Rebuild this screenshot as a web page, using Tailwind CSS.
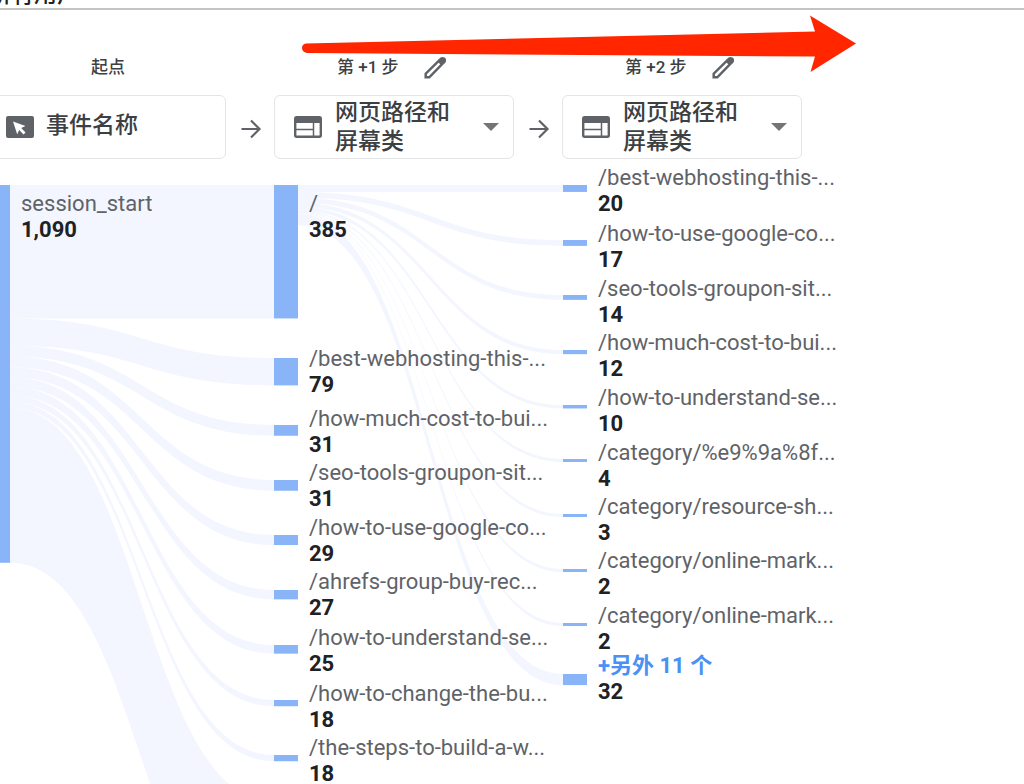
<!DOCTYPE html>
<html lang="zh-CN">
<head>
    <meta charset="UTF-8">
    <meta name="viewport" content="width=device-width, initial-scale=1.0">
    <title>路径探索</title>
    <script src="https://cdn.jsdelivr.net/npm/@tailwindcss/browser@4"></script>
</head>
<body class="bg-white font-[Roboto,'Noto_Sans_CJK_SC',sans-serif] text-[#3c4043]">
    <div class="relative flex h-screen flex-col overflow-hidden">
        <!-- Segment bar, scrolled almost out of view -->
        <header class="flex h-[10px] shrink-0 items-end overflow-hidden border-b-2 border-[#c4c4c4]">
            <h1 class="-ml-3 text-[23px] leading-[26px] font-medium text-[#202124]">所有用户</h1>
        </header>

        <!-- Steps -->
        <section class="-ml-[14px] flex shrink-0 pt-[38px]">
            <div class="w-60 shrink-0">
                <h2 class="flex h-10 items-center justify-center pl-1 text-[17px] font-medium">起点</h2>
                <div class="mt-[7px] flex h-16 items-center gap-3 rounded-md border border-[#e4e5e7] pb-px pl-[19px] text-[23px] font-medium">
                    <svg class="h-[22px] w-7 shrink-0" viewBox="0 0 28 22">
                        <rect width="28" height="22" rx="2" fill="#5f6368"/>
                        <path d="M7 5.500l12.500 4.500-4.300 2.100 4.300 4.300-2 2-4.300-4.400-2 4.200z" fill="#fff"/>
                    </svg>
                    <span>事件名称</span>
                </div>
            </div>

            <div class="flex w-12 shrink-0 items-end justify-center pb-[19px] pl-px">
                <svg class="size-[22px]" viewBox="0 0 22 22" fill="none" stroke="#5f6368" stroke-width="2.200"><path d="M1.500 11h18M11 2.500l8.500 8.500-8.500 8.500"/></svg>
            </div>

            <div class="w-60 shrink-0">
                <div class="flex h-10 items-center gap-6 pl-[63px]">
                    <h2 class="text-[17px] font-medium">第 +1 步</h2>
                    <button type="button" aria-label="编辑第 +1 步">
                        <svg class="size-6" viewBox="0 0 24 24" fill="none" stroke="#5f6368" stroke-width="2.500"><path d="M2.700 21.300v-3.600L17.500 3.200a2 2 0 0 1 3 0l.3.300a2 2 0 0 1 0 3L6.300 21.300z"/><path d="M14.500 5.500l4-4q2.500-.8 3.800.6t.4 3.800L18.500 9.500z" fill="#5f6368" stroke="none"/></svg>
                    </button>
                </div>
                <label class="relative mt-[7px] flex h-16 items-center rounded-md border border-[#e4e5e7] pr-[14px] pb-px pl-[19px]">
                    <svg class="mr-[13px] h-[22px] w-7 shrink-0" viewBox="0 0 28 22"><rect x="1.200" y="1.200" width="25.600" height="19.600" rx="1.500" fill="none" stroke="#5f6368" stroke-width="2.400"/><path d="M1 1h26v6H1z" fill="#5f6368"/><path d="M2 13.500h17M19.500 7v14" stroke="#5f6368" stroke-width="1.500"/></svg>
                    <span class="w-[126px] text-[23px] leading-[29px] font-medium">网页路径和屏幕类</span>
                    <svg class="ml-auto h-2 w-4" viewBox="0 0 16 8"><path d="M0 0h16L8 8z" fill="#757575"/></svg>
                    <select class="absolute inset-0 size-full cursor-pointer opacity-0">
                        <option>网页路径和屏幕类</option>
                        <option>事件名称</option>
                    </select>
                </label>
            </div>

            <div class="flex w-12 shrink-0 items-end justify-center pb-[19px] pl-px">
                <svg class="size-[22px]" viewBox="0 0 22 22" fill="none" stroke="#5f6368" stroke-width="2.200"><path d="M1.500 11h18M11 2.500l8.500 8.500-8.500 8.500"/></svg>
            </div>

            <div class="w-60 shrink-0">
                <div class="flex h-10 items-center gap-6 pl-[63px]">
                    <h2 class="text-[17px] font-medium">第 +2 步</h2>
                    <button type="button" aria-label="编辑第 +2 步">
                        <svg class="size-6" viewBox="0 0 24 24" fill="none" stroke="#5f6368" stroke-width="2.500"><path d="M2.700 21.300v-3.600L17.500 3.200a2 2 0 0 1 3 0l.3.300a2 2 0 0 1 0 3L6.300 21.300z"/><path d="M14.500 5.500l4-4q2.500-.8 3.800.6t.4 3.800L18.500 9.500z" fill="#5f6368" stroke="none"/></svg>
                    </button>
                </div>
                <label class="relative mt-[7px] flex h-16 items-center rounded-md border border-[#e4e5e7] pr-[14px] pb-px pl-[19px]">
                    <svg class="mr-[13px] h-[22px] w-7 shrink-0" viewBox="0 0 28 22"><rect x="1.200" y="1.200" width="25.600" height="19.600" rx="1.500" fill="none" stroke="#5f6368" stroke-width="2.400"/><path d="M1 1h26v6H1z" fill="#5f6368"/><path d="M2 13.500h17M19.500 7v14" stroke="#5f6368" stroke-width="1.500"/></svg>
                    <span class="w-[126px] text-[23px] leading-[29px] font-medium">网页路径和屏幕类</span>
                    <svg class="ml-auto h-2 w-4" viewBox="0 0 16 8"><path d="M0 0h16L8 8z" fill="#757575"/></svg>
                    <select class="absolute inset-0 size-full cursor-pointer opacity-0">
                        <option>网页路径和屏幕类</option>
                        <option>事件名称</option>
                    </select>
                </label>
            </div>
        </section>

        <!-- Path chart -->
        <svg id="chart" class="min-h-0 w-full flex-1"></svg>

        <!-- Arrow annotation -->
        <svg class="pointer-events-none absolute top-[14px] left-[301px] h-[60px] w-[556px]" viewBox="0 0 556 60" fill="#ff2600">
            <path d="M5 29.500L514 17.500 509 1.500 555 29.500 509.500 58 514 42.500 6 39Q1 38 1 34Q1 30 5 29.500z"/>
        </svg>
    </div>

    <script>
        const NS = 'http://www.w3.org/2000/svg';
        const SCALE = 0.3466; // px per user
        const chart = document.getElementById('chart');

        // [label, count, node top, label baseline]
        const start = { x: -14, nodes: [['session_start', 1090, 26, 52]] };
        const step1 = { x: 274, nodes: [
            ['/', 385, 26, 52],
            ['/best-webhosting-this-...', 79, 199, 207],
            ['/how-much-cost-to-bui...', 31, 266, 267],
            ['/seo-tools-groupon-sit...', 31, 321, 321],
            ['/how-to-use-google-co...', 29, 376, 376],
            ['/ahrefs-group-buy-rec...', 27, 431, 430],
            ['/how-to-understand-se...', 25, 486, 486],
            ['/how-to-change-the-bu...', 18, 541, 542],
            ['/the-steps-to-build-a-w...', 18, 596, 596],
            ['', 447, 643, 0]
        ] };
        const step2 = { x: 563, nodes: [
            ['/best-webhosting-this-...', 20, 26, 26],
            ['/how-to-use-google-co...', 17, 81, 82],
            ['/seo-tools-groupon-sit...', 14, 136, 137],
            ['/how-much-cost-to-bui...', 12, 191, 191],
            ['/how-to-understand-se...', 10, 246, 246],
            ['/category/%e9%9a%8f...', 4, 300, 301],
            ['/category/resource-sh...', 3, 355, 355],
            ['/category/online-mark...', 2, 410, 409],
            ['/category/online-mark...', 2, 464, 464],
            ['+另外 11 个', 32, 515, 514]
        ] };

        function add(parent, tag, attrs, text) {
            const el = document.createElementNS(NS, tag);
            for (const key in attrs) el.setAttribute(key, attrs[key]);
            if (text) el.textContent = text;
            parent.appendChild(el);
        }

        function height(count) {
            return Math.max(3, count * SCALE);
        }

        function drawLinks(from, to) {
            const x0 = from.x + 24, x1 = to.x, mid = (x0 + x1) / 2;
            let y = from.nodes[0][2];
            to.nodes.forEach(([, count, top]) => {
                const h = count * SCALE, end = top + height(count);
                add(chart, 'path', {
                    class: 'fill-[#f3f6fe]',
                    d: `M${x0} ${y}C${mid} ${y} ${mid} ${top} ${x1} ${top}V${end}C${mid} ${end} ${mid} ${y + h} ${x0} ${y + h}z`
                });
                y += h;
            });
        }

        function drawNodes(column) {
            column.nodes.forEach(([label, count, top, baseline]) => {
                add(chart, 'rect', { class: 'fill-[#8ab4f8]', x: column.x, y: top, width: 24, height: height(count) });
                if (!label) return;
                const more = label.startsWith('+');
                const x = column.x + 35;
                add(chart, 'text', {
                    class: more ? 'cursor-pointer fill-[#4a90f5] text-[22px] font-bold' : 'fill-[#5f6368] text-[22px]',
                    x, y: baseline
                }, label);
                add(chart, 'text', { class: 'fill-[#202124] text-[22px] font-bold', x, y: baseline + 26 }, count.toLocaleString('en-US'));
            });
        }

        drawLinks(start, step1);
        drawLinks(step1, step2);
        [start, step1, step2].forEach(drawNodes);
    </script>
</body>
</html>
